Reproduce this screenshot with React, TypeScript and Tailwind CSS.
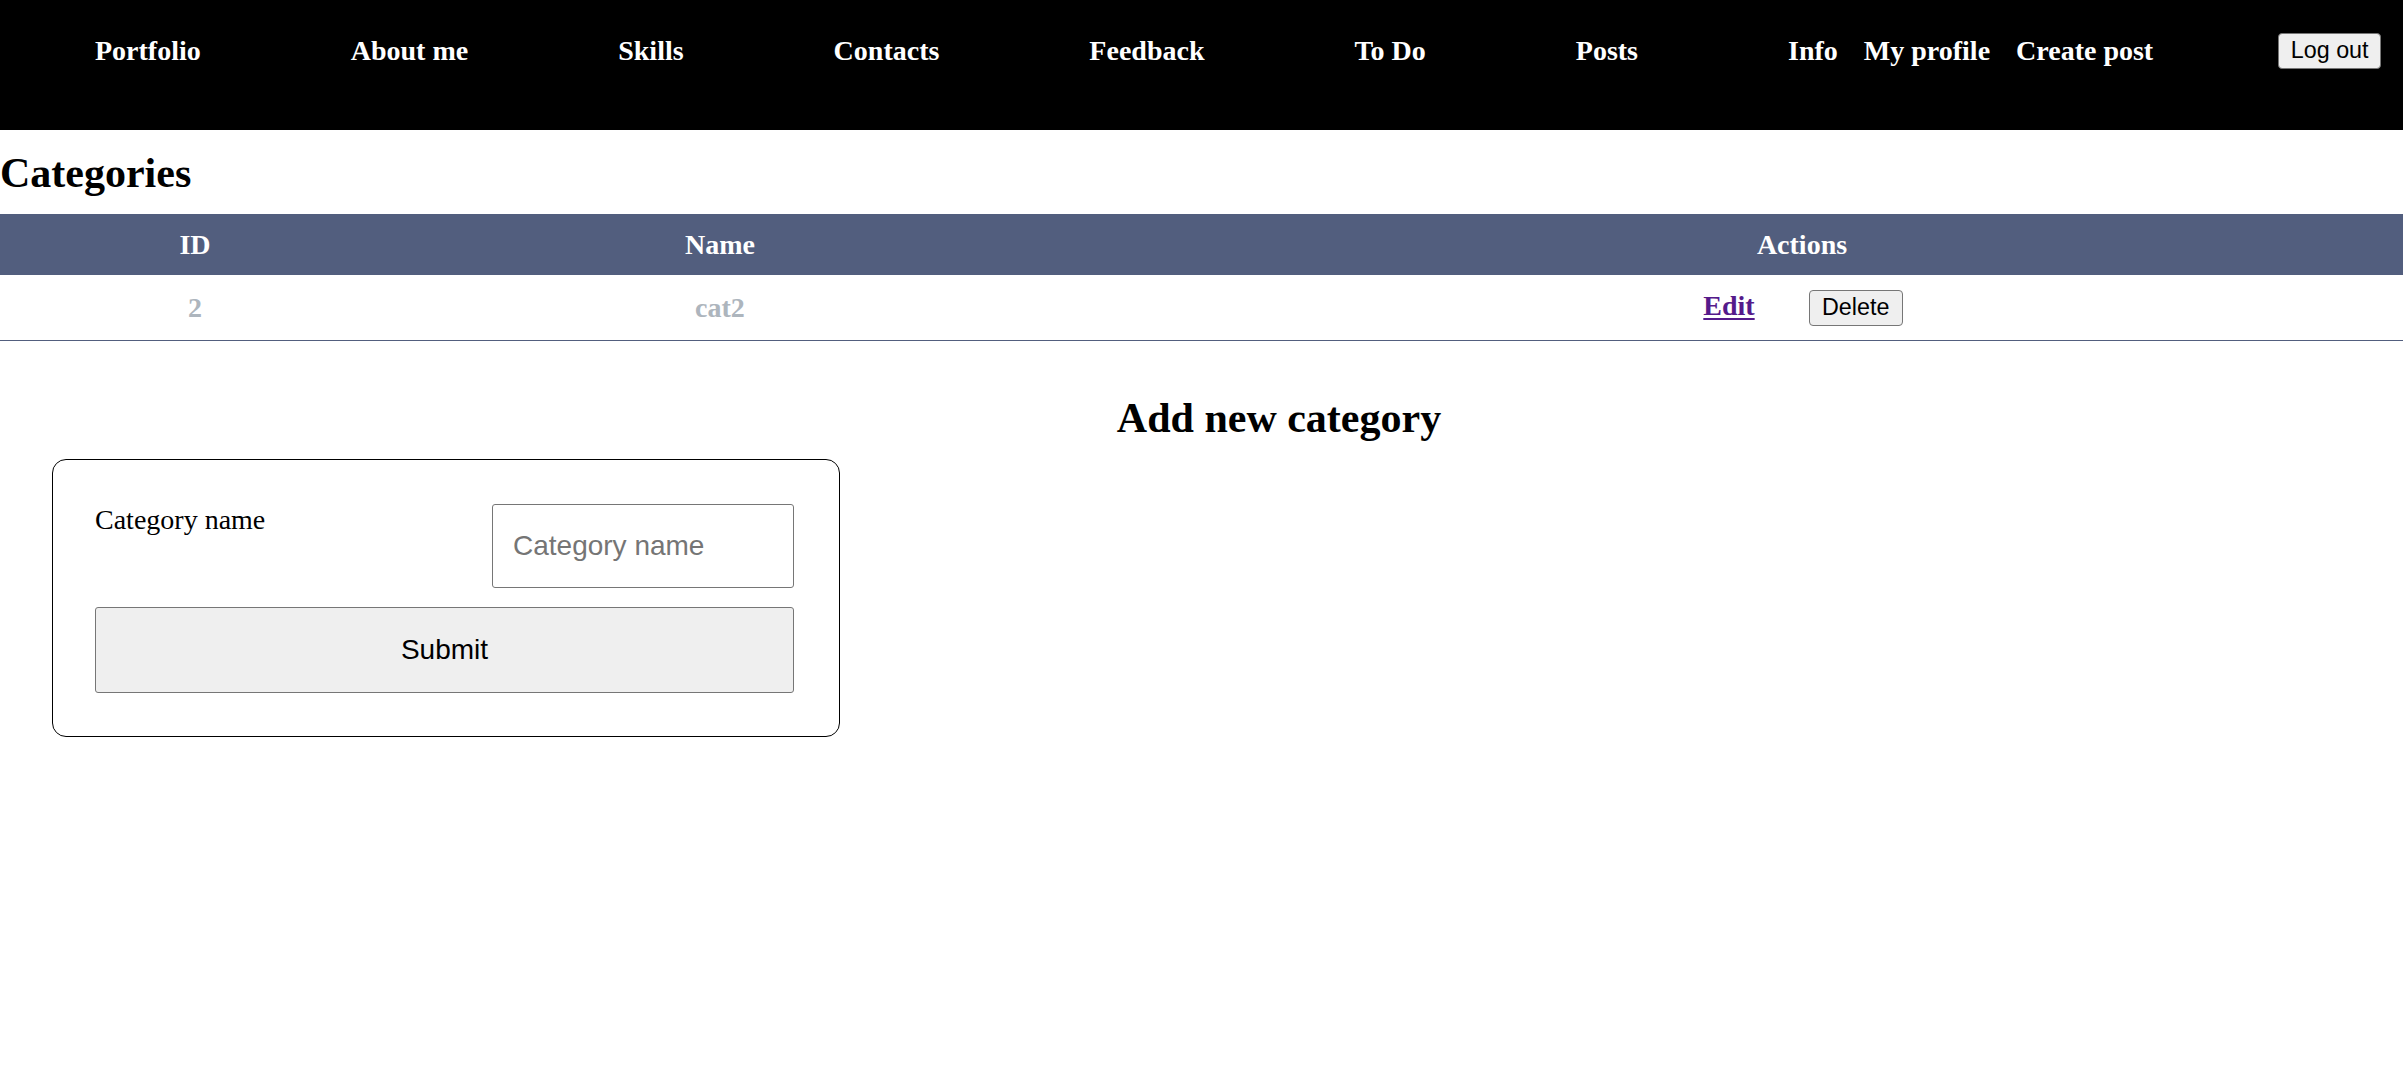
import React from "react";

const serif = { fontFamily: '"Liberation Serif", "Times New Roman", serif' };
const sans = { fontFamily: '"Liberation Sans", Arial, sans-serif' };

export default function App() {
  return (
    <div className="w-[2403px] min-h-[1074px] bg-white text-black" style={serif}>
      <nav className="h-[130px] bg-black">
        <div className="h-[101px] flex items-center text-white font-bold text-[28px] leading-[32px]">
          <div className="ml-[95px] flex items-center gap-[150px]">
            <a>Portfolio</a>
            <a>About me</a>
            <a>Skills</a>
            <a>Contacts</a>
            <a>Feedback</a>
            <a>To Do</a>
            <a>Posts</a>
            <div className="flex items-center gap-[26px]">
              <a>Info</a>
              <a>My profile</a>
              <a>Create post</a>
            </div>
          </div>
          <button
            className="ml-[125px] w-[103px] h-[36px] flex items-center justify-center bg-[#efefef] border border-[#767676] rounded-[4px] text-black font-normal text-[23.3px] leading-[27px]"
            style={sans}
          >
            Log out
          </button>
        </div>
      </nav>

      <h1 className="mt-[19px] mb-[17px] text-[42px] leading-[48px] font-bold">Categories</h1>

      <div className="w-full">
        <div className="h-[61px] flex items-center bg-[#525e7e] text-white font-bold text-[28px] leading-[32px]">
          <div className="w-[390px] text-center">ID</div>
          <div className="w-[660px] text-center">Name</div>
          <div className="w-[151px]"></div>
          <div className="flex-1 text-center">Actions</div>
        </div>
        <div className="h-[66px] flex items-center border-b border-[#525e7e] font-bold text-[28px] leading-[32px]">
          <div className="w-[390px] text-center text-[#adb5bd]">2</div>
          <div className="w-[660px] text-center text-[#adb5bd]">cat2</div>
          <div className="w-[151px]"></div>
          <div className="flex-1 flex items-center justify-center gap-[54px]">
            <a className="text-[#551a8b] underline underline-offset-[3px] mt-[-4px] ml-[2px]">Edit</a>
            <button
              className="w-[94px] h-[36px] flex items-center justify-center bg-[#efefef] border border-[#767676] rounded-[4px] text-black font-normal text-[23.3px] leading-[27px]"
              style={sans}
            >
              Delete
            </button>
          </div>
        </div>
      </div>

      <h2 className="mt-[53px] mb-[17px] pl-[155px] text-center text-[42px] leading-[48px] font-bold">
        Add new category
      </h2>

      <div className="ml-[52px] w-[788px] h-[278px] border border-black rounded-[14px] pl-[42px] pr-[45px] pt-[44px]">
        <div className="flex items-start justify-between">
          <label className="text-[28px] leading-[32px]">Category name</label>
          <input
            placeholder="Category name"
            className="w-[302px] h-[84px] border border-[#767676] rounded-[3px] pl-[20px] text-[28px] placeholder:text-[#757575] outline-none"
            style={sans}
          />
        </div>
        <button
          className="mt-[19px] w-full h-[86px] bg-[#efefef] border border-[#767676] rounded-[3px] text-[28px] text-black flex items-center justify-center"
          style={sans}
        >
          Submit
        </button>
      </div>
    </div>
  );
}
